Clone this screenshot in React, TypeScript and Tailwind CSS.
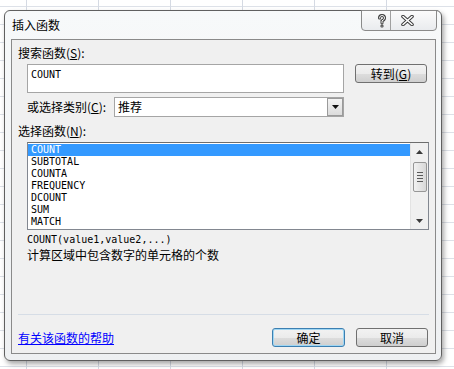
import React from "react";

const cjk = "font-['SimSun','Noto_Sans_CJK_SC',sans-serif]";
const mono = "font-['DejaVu_Sans_Mono','Noto_Sans_CJK_SC',monospace]";

const items = ["COUNT", "SUBTOTAL", "COUNTA", "FREQUENCY", "DCOUNT", "SUM", "MATCH"];

function Btn({ children, def }: { children: React.ReactNode; def?: boolean }) {
  return (
    <div
      className={`flex h-[19px] w-[72px] items-center justify-center rounded-[3px] border ${
        def ? "w-[73px] border-[#3c7fb1] shadow-[inset_0_0_0_1px_#9fd6f3]" : "border-[#707070]"
      } bg-[linear-gradient(to_bottom,#f2f2f2_0%,#ebebeb_50%,#dddddd_51%,#cfcfcf_100%)] text-[12px] leading-[14px] text-black ${cjk}`}
    >
      {children}
    </div>
  );
}

export default function App() {
  return (
    <div className="relative h-[369px] w-[454px] overflow-hidden bg-white bg-[linear-gradient(to_right,#d5dae3_1px,transparent_1px),linear-gradient(to_bottom,#dde1e8_1px,transparent_1px)] bg-size-[72px_18px] bg-position-[26px_6px]">
      <div className="absolute left-[4px] top-[10px] flex h-[351px] w-[438px] flex-col rounded-[6px] border border-[#606060] bg-[linear-gradient(to_bottom,#f7f9fa,#eef0f2)] shadow-[2px_3px_5px_rgba(0,0,0,0.35)]">
        {/* title bar */}
        <div className="flex h-[28px] items-start">
          <span className={`ml-[7px] mt-[7px] text-[12px] leading-[14px] text-black ${cjk}`}>插入函数</span>
          <div className="-mt-[1px] ml-auto mr-[4px] flex h-[21px] rounded-b-[4px] border border-[#8a8a8a] bg-[linear-gradient(to_bottom,#fbfbfb,#e9ebee)]">
            <div className="flex w-[28px] items-center justify-end pr-[4px]">
              <svg width="8" height="14" viewBox="0 0 8 14">
                <path d="M1.5 4 Q1.5 1.5 4 1.5 Q6.5 1.5 6.5 4 Q6.5 5.8 4 6.8 L4 9" fill="none" stroke="#3c3c3c" strokeWidth="3" strokeLinecap="round" />
                <circle cx="4" cy="12" r="1.6" fill="#3c3c3c" />
                <path d="M1.5 4 Q1.5 1.5 4 1.5 Q6.5 1.5 6.5 4 Q6.5 5.8 4 6.8 L4 9" fill="none" stroke="#ffffff" strokeWidth="1" strokeLinecap="round" />
                <circle cx="4" cy="12" r="0.6" fill="#ffffff" />
              </svg>
            </div>
            <div className="flex w-[46px] items-center border-l border-[#a0a0a0] pl-[10px]">
              <svg width="13" height="11" viewBox="0 0 13 11">
                <path d="M2 1.5 L11 9.5 M11 1.5 L2 9.5" stroke="#3c3c3c" strokeWidth="3.6" strokeLinecap="round" />
                <path d="M2 1.5 L11 9.5 M11 1.5 L2 9.5" stroke="#ffffff" strokeWidth="1.6" strokeLinecap="round" />
              </svg>
            </div>
          </div>
        </div>

        {/* client panel */}
        <div className="mb-[6px] ml-[6px] mr-[5px] flex flex-1 flex-col border border-[#8a8a8a] bg-[#f0f0f0] pb-[6px] pl-[6px] pr-[7px] pt-[6px] text-black">
          <div className={`text-[12px] leading-[14px] ${cjk}`}>
            搜索函数(<span className="underline">S</span>):
          </div>

          <div className="mt-[4px] flex items-start">
            <div className={`ml-[9px] h-[29px] w-[317px] border border-[#a5a5a5] bg-white pl-[3px] pt-[4px] text-[10px] leading-[12px] ${mono}`}>
              COUNT
            </div>
            <div className="ml-[11px]">
              <Btn>
                转到(<span className="underline">G</span>)
              </Btn>
            </div>
          </div>

          <div className="mt-[4px] flex h-[20px] items-center">
            <div className={`ml-[9px] w-[87px] text-[12px] leading-[14px] ${cjk}`}>
              或选择类别(<span className="underline">C</span>):
            </div>
            <div className="flex h-[20px] w-[230px] items-stretch border border-[#a5a5a5] bg-white">
              <div className={`flex flex-1 items-center pl-[3px] text-[12px] leading-[14px] ${cjk}`}>推荐</div>
              <div className="flex w-[16px] items-center justify-center border border-[#9a9a9a] bg-[linear-gradient(to_bottom,#f4f4f4,#dcdcdc)]">
                <svg width="7" height="4" viewBox="0 0 7 4">
                  <path d="M0 0 L7 0 L3.5 4 Z" fill="#111" />
                </svg>
              </div>
            </div>
          </div>

          <div className={`mt-[7px] text-[12px] leading-[14px] ${cjk}`}>
            选择函数(<span className="underline">N</span>):
          </div>

          <div className="ml-[9px] mt-[4px] flex h-[88px] w-[402px] border border-[#828790] border-t-[#6d6d6d] bg-white">
            <div className="flex flex-1 flex-col pt-[1px]">
              {items.map((it, i) => (
                <div
                  key={it}
                  className={`h-[12px] pl-[3px] text-[10px] leading-[12px] ${mono} ${
                    i === 0 ? "bg-[#3399ff] text-white" : "text-black"
                  }`}
                >
                  {it}
                </div>
              ))}
            </div>
            <div className="flex w-[18px] flex-col items-center border-l border-[#e3e3e3] bg-[#f0f0f0]">
              <div className="flex h-[17px] items-center justify-center">
                <svg width="7" height="4" viewBox="0 0 7 4">
                  <path d="M0 4 L7 4 L3.5 0 Z" fill="#3a3a3a" />
                </svg>
              </div>
              <div className="mt-[2px] flex h-[30px] w-[14px] flex-col items-center justify-center gap-[2px] rounded-[2px] border border-[#979797] bg-[linear-gradient(to_right,#f2f2f2,#d8d8d8)]">
                <div className="h-px w-[6px] bg-[#5a5a5a]" />
                <div className="h-px w-[6px] bg-[#5a5a5a]" />
                <div className="h-px w-[6px] bg-[#5a5a5a]" />
                <div className="h-px w-[6px] bg-[#5a5a5a]" />
              </div>
              <div className="mt-auto flex h-[17px] items-center justify-center">
                <svg width="7" height="4" viewBox="0 0 7 4">
                  <path d="M0 0 L7 0 L3.5 4 Z" fill="#3a3a3a" />
                </svg>
              </div>
            </div>
          </div>

          <div className={`ml-[9px] mt-[4px] text-[10px] leading-[12px] ${mono}`}>COUNT(value1,value2,...)</div>
          <div className={`ml-[9px] mt-[2px] text-[12px] leading-[14px] ${cjk}`}>计算区域中包含数字的单元格的个数</div>

          <div className="mt-auto h-px w-[411px] bg-[#d6dde6]" />
          <div className="mt-[13px] flex h-[19px] items-center">
            <a className={`text-[12px] leading-[14px] text-[#0000ff] underline ${cjk}`}>有关该函数的帮助</a>
            <div className="ml-auto flex gap-[11px]">
              <Btn def>确定</Btn>
              <Btn>取消</Btn>
            </div>
          </div>
        </div>
      </div>
    </div>
  );
}
